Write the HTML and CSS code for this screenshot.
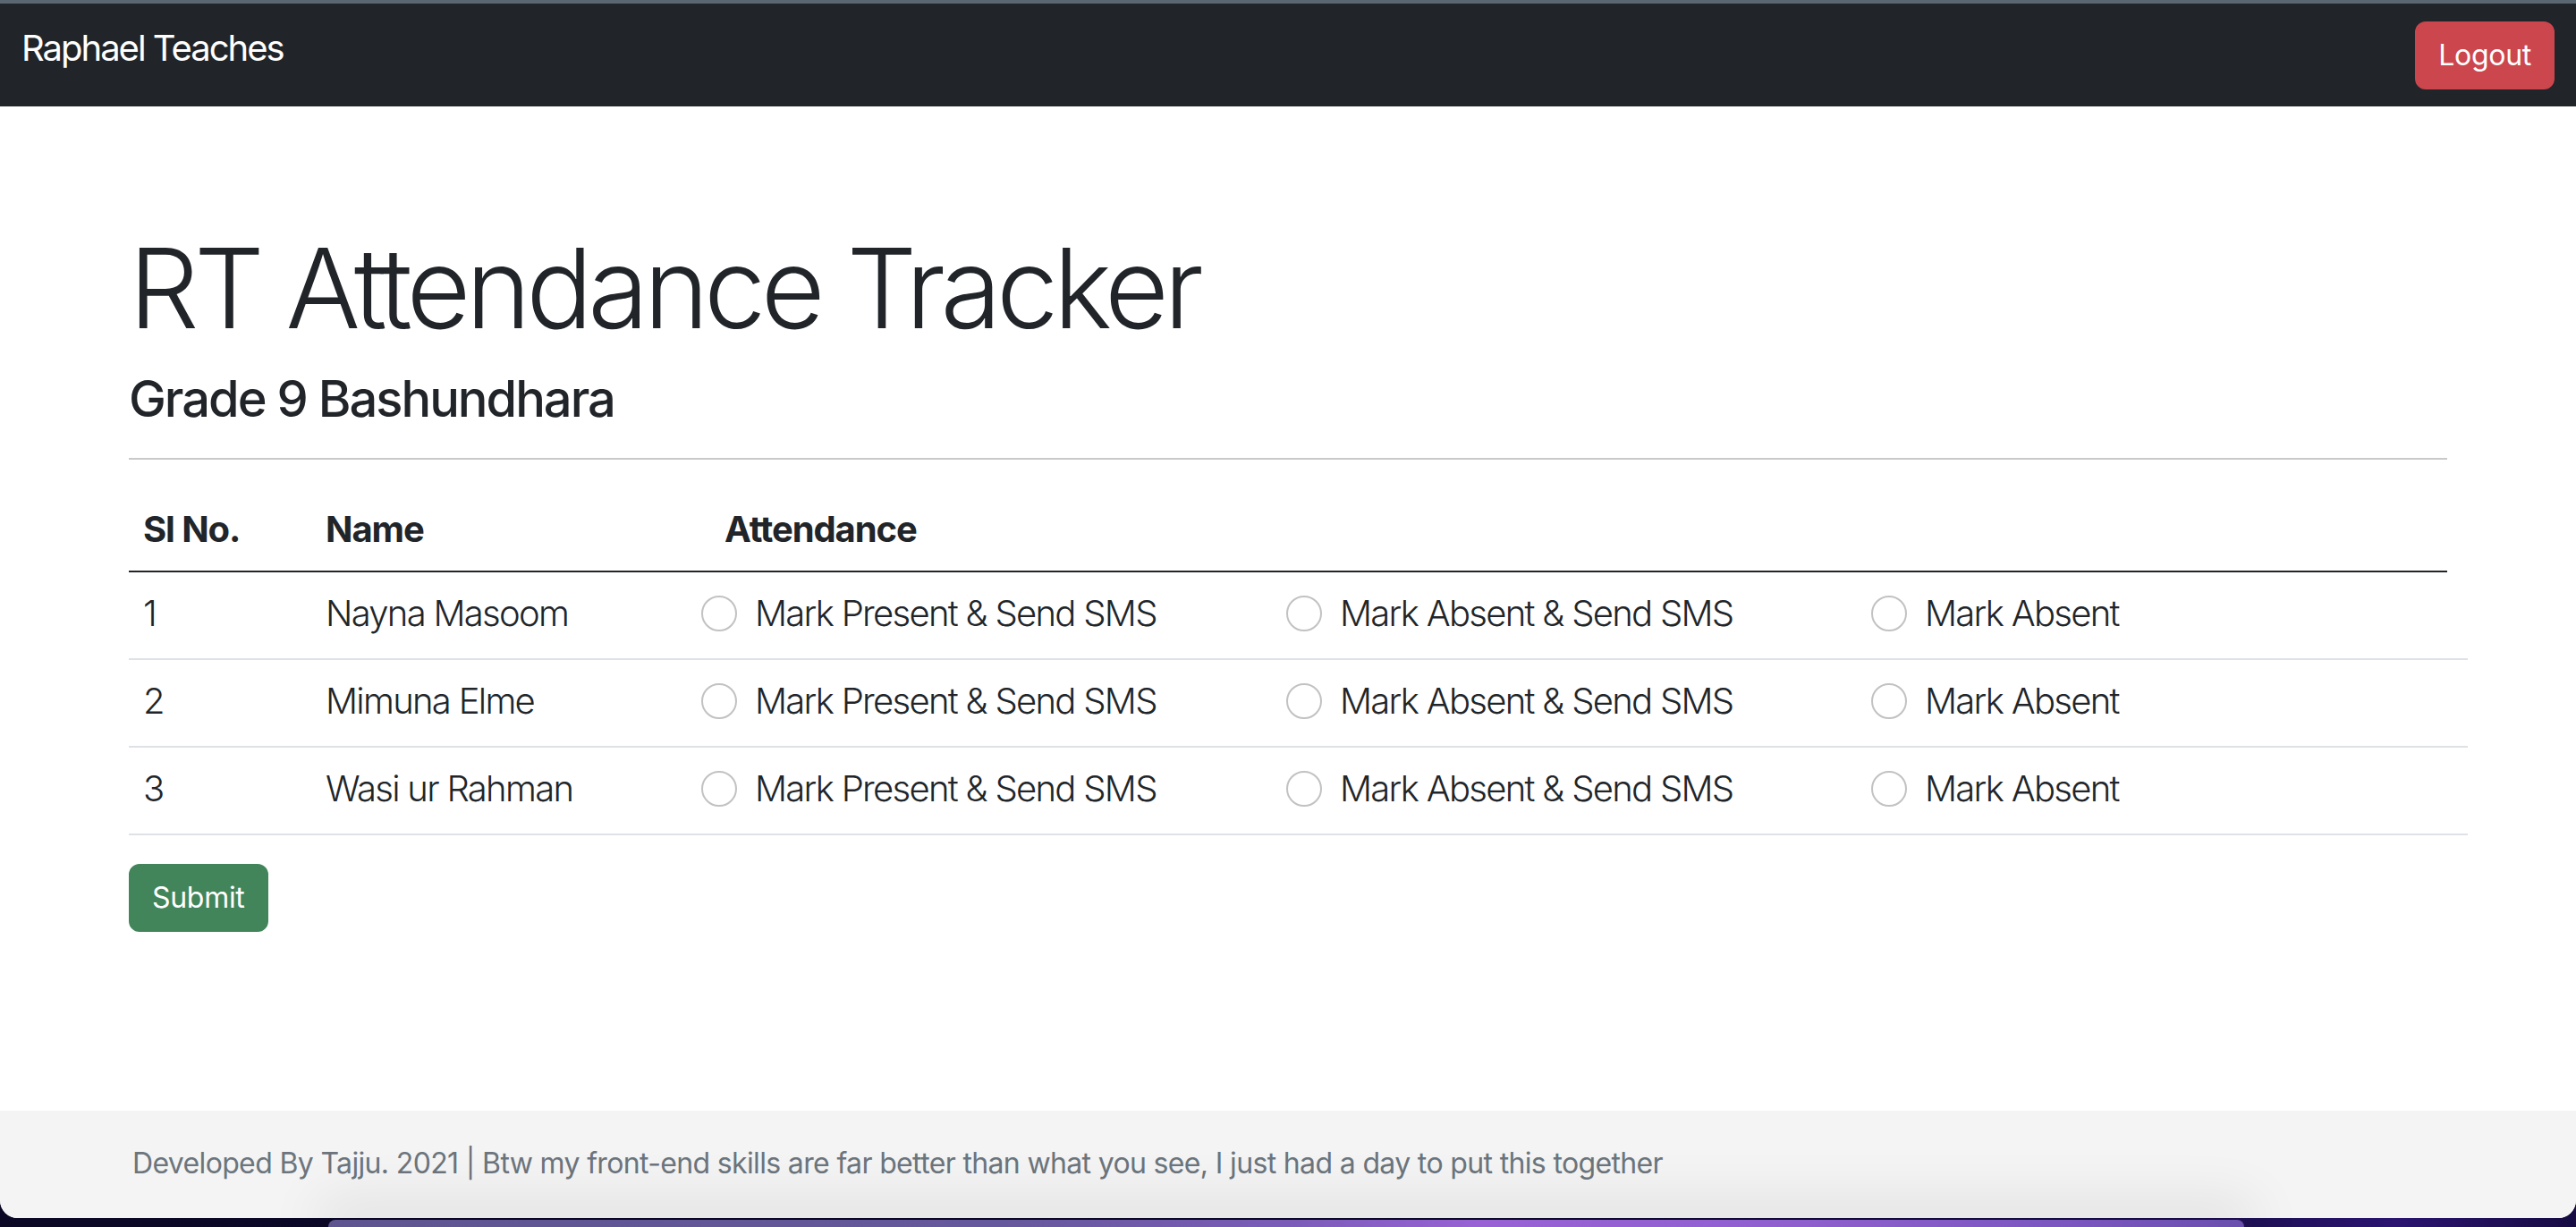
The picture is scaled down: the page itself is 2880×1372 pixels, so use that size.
FILE: index.html
```html
<!DOCTYPE html>
<html lang="en">
<head>
<meta charset="utf-8">
<title>RT Attendance Tracker</title>
<link rel="stylesheet" href="styles.css">
</head>
<body>
<div class="window">
  <div class="chrome-edge"></div>
  <nav class="navbar">
    <a class="brand" href="#">Raphael Teaches</a>
    <button class="btn btn-danger" type="button">Logout</button>
  </nav>
  <main class="container main">
    <h1 class="display">RT Attendance Tracker</h1>
    <h3 class="subtitle">Grade 9 Bashundhara</h3>
    <hr class="rule">
    <form class="attendance">
      <div class="table">
        <div class="thead">
          <div class="th c-sl">Sl No.</div>
          <div class="th c-name-h">Name</div>
          <div class="th c-att-h">Attendance</div>
        </div>
        <div class="tr">
          <div class="td c-sl">1</div>
          <div class="td c-name">Nayna Masoom</div>
          <div class="td c-att">
            <label class="check"><input type="radio" name="s1">Mark Present &amp; Send SMS</label>
            <label class="check"><input type="radio" name="s1">Mark Absent &amp; Send SMS</label>
            <label class="check"><input type="radio" name="s1">Mark Absent</label>
          </div>
        </div>
        <div class="tr">
          <div class="td c-sl">2</div>
          <div class="td c-name">Mimuna Elme</div>
          <div class="td c-att">
            <label class="check"><input type="radio" name="s2">Mark Present &amp; Send SMS</label>
            <label class="check"><input type="radio" name="s2">Mark Absent &amp; Send SMS</label>
            <label class="check"><input type="radio" name="s2">Mark Absent</label>
          </div>
        </div>
        <div class="tr">
          <div class="td c-sl">3</div>
          <div class="td c-name">Wasi ur Rahman</div>
          <div class="td c-att">
            <label class="check"><input type="radio" name="s3">Mark Present &amp; Send SMS</label>
            <label class="check"><input type="radio" name="s3">Mark Absent &amp; Send SMS</label>
            <label class="check"><input type="radio" name="s3">Mark Absent</label>
          </div>
        </div>
      </div>
      <button class="btn btn-success btn-submit" type="button">Submit</button>
    </form>
  </main>
  <footer class="footer">
    <div class="container footer-inner">Developed By Tajju. 2021 | Btw my front-end skills are far better than what you see, I just had a day to put this together</div>
  </footer>
</div>
<div class="desktop">
  <div class="dock"></div>
</div>
</body>
</html>
```

FILE: styles.css
```css
* { box-sizing: border-box; }

html, body {
  margin: 0;
  padding: 0;
}

body {
  font-family: Inter, "Noto Sans", "Liberation Sans", sans-serif;
  color: #212529;
  background: linear-gradient(90deg, #0b0826 0%, #0d0a2c 55%, #1a0f4a 85%, #2a1470 93%, #170b42 100%);
  height: 1372px;
  overflow: hidden;
}

.window {
  position: relative;
  z-index: 0;
  height: 1362px;
  background: #fff;
  display: flex;
  flex-direction: column;
  border-bottom-left-radius: 20px;
  border-bottom-right-radius: 20px;
  overflow: hidden;
}

.chrome-edge {
  height: 4px;
  background: #5a6670;
}

.navbar {
  height: 115px;
  background: #212529;
  display: flex;
  justify-content: space-between;
  align-items: center;
  padding: 0 24px;
}

.brand {
  align-self: flex-start;
  margin-top: 20px;
  font-size: 40px;
  line-height: 60px;
  letter-spacing: -2px;
  color: #fff;
  text-decoration: none;
  font-weight: 400;
}

.btn {
  font-family: inherit;
  font-weight: 400;
  font-size: 32px;
  line-height: 48px;
  letter-spacing: -0.3px;
  color: #fff;
  border: 2px solid transparent;
  border-radius: 12px;
  padding: 12px 24px;
  cursor: pointer;
}

.btn-danger {
  background: #cc464d;
  border-color: #cc464d;
}

.btn-success {
  background: #42855a;
  border-color: #42855a;
}

.container {
  width: 2592px;
  margin: 0 auto;
}

.main {
  flex: 1;
  padding-top: 129px;
}

.display {
  font-size: 124px;
  font-weight: 300;
  line-height: 1.2;
  letter-spacing: -5.6px;
  margin: 0 0 16px;
}

.subtitle {
  font-size: 56px;
  font-weight: 500;
  line-height: 1.2;
  letter-spacing: -2px;
  margin: 0;
}

.rule {
  margin: 32px 0;
  border: 0;
  height: 2px;
  background: #c8c9ca;
}

.table {
  font-size: 40px;
  font-weight: 300;
  line-height: 60px;
  letter-spacing: -1.7px;
  margin-bottom: 32px;
}

.thead {
  display: flex;
  border-bottom: 2px solid #212529;
}

.th {
  padding: 16px;
  font-weight: 700;
  letter-spacing: -1.1px;
}

.c-sl { width: 204px; flex: none; }
.c-name-h { width: 446px; flex: none; }
.c-att-h { flex: 1; }
.c-name { width: 420px; flex: none; }

.tr {
  display: flex;
  width: 2615px;
}

.td {
  padding: 16px;
  border-bottom: 2px solid #dee2e6;
}

.c-att {
  flex: none;
  width: 1991px;
  display: grid;
  grid-template-columns: repeat(3, 654px);
}

.check {
  display: block;
  padding-left: 60px;
  margin-bottom: 4px;
  min-height: 60px;
}

.check input {
  appearance: none;
  -webkit-appearance: none;
  float: left;
  width: 40px;
  height: 40px;
  margin: 10px 0 0 -60px;
  border: 2px solid #c2c2c2;
  border-radius: 50%;
  background: #fff;
}

.footer {
  height: 120px;
  background: #f4f4f4;
  padding-top: 35px;
}

.footer-inner {
  padding-left: 4px;
  font-size: 32px;
  line-height: 48px;
  letter-spacing: -0.65px;
  color: #6c757d;
}

.desktop {
  position: relative;
  z-index: 1;
  height: 10px;
  padding-top: 2px;
}

.dock {
  margin-left: 367px;
  width: 2142px;
  height: 8px;
  border-radius: 20px 20px 0 0;
  background: linear-gradient(90deg, #5e5590 0%, #66589c 35%, #7a5cb8 50%, #9862d4 60%, #9160d0 75%, #7c57c0 90%, #6a4fae 100%);
  box-shadow: 0 -6px 60px 14px rgba(0, 0, 0, 0.10);
}
```
